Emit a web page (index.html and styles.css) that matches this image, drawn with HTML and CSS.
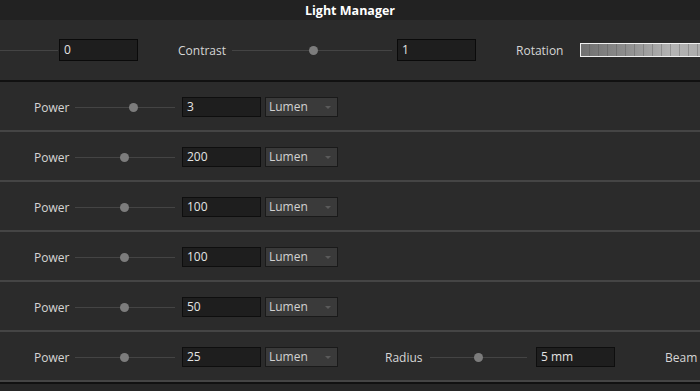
FILE: index.html
```html
<!DOCTYPE html>
<html lang="en">
<head>
    <meta charset="UTF-8">
    <title>Light Manager</title>
    <link rel="stylesheet" href="styles.css">
</head>
<body>
    <div class="title">Light Manager</div>

    <div class="toolbar">
        <div class="slider slider-stub"><span class="knob" style="left: -20px"></span></div>
        <div class="field field-tall">0</div>
        <span class="label label-contrast">Contrast</span>
        <div class="slider slider-wide"><span class="knob" style="left: 77px"></span></div>
        <div class="field field-tall">1</div>
        <span class="label label-rotation">Rotation</span>
        <div class="rotation"></div>
    </div>

    <div class="row">
        <span class="label">Power</span>
        <div class="slider"><span class="knob" style="left: 54px"></span></div>
        <div class="field">3</div>
        <div class="unit">Lumen</div>
    </div>
    <div class="row">
        <span class="label">Power</span>
        <div class="slider"><span class="knob" style="left: 45px"></span></div>
        <div class="field">200</div>
        <div class="unit">Lumen</div>
    </div>
    <div class="row">
        <span class="label">Power</span>
        <div class="slider"><span class="knob" style="left: 45px"></span></div>
        <div class="field">100</div>
        <div class="unit">Lumen</div>
    </div>
    <div class="row">
        <span class="label">Power</span>
        <div class="slider"><span class="knob" style="left: 45px"></span></div>
        <div class="field">100</div>
        <div class="unit">Lumen</div>
    </div>
    <div class="row">
        <span class="label">Power</span>
        <div class="slider"><span class="knob" style="left: 45px"></span></div>
        <div class="field">50</div>
        <div class="unit">Lumen</div>
    </div>
    <div class="row">
        <span class="label">Power</span>
        <div class="slider"><span class="knob" style="left: 45px"></span></div>
        <div class="field">25</div>
        <div class="unit">Lumen</div>
        <span class="label label-radius">Radius</span>
        <div class="slider slider-radius"><span class="knob" style="left: 44px"></span></div>
        <div class="field field-radius">5 mm</div>
        <span class="label label-beam">Beam</span>
    </div>
    <div class="footer"></div>
</body>
</html>
```

FILE: styles.css
```css
body {
    margin: 0;
    background-color: #262626;
    color: #d6d6d6;
    font-family: "Open Sans", "Noto Sans", sans-serif;
    font-size: 12px;
    overflow: hidden;
}
.title {
    height: 20px;
    line-height: 21px;
    background-color: #222;
    color: #fff;
    font-size: 12.5px;
    font-weight: bold;
    text-align: center;
}
.toolbar {
    height: 60px;
    display: flex;
    align-items: center;
    background-color: #2b2b2b;
    border-bottom: 2px solid #111;
    white-space: nowrap;
}
.row {
    height: 46px;
    padding-top: 2px;
    display: flex;
    align-items: center;
    padding-left: 34px;
    background-color: #2b2b2b;
    border-bottom: 2px solid #454545;
    white-space: nowrap;
}
.footer {
    border-top: 2px solid #111;
    height: 10px;
    background-color: #262626;
}
.label {
    width: 41px;
    flex-shrink: 0;
}
.slider {
    position: relative;
    width: 100px;
    height: 1px;
    background-color: #444;
    flex-shrink: 0;
}
.knob {
    position: absolute;
    top: -4px;
    width: 9px;
    height: 9px;
    border-radius: 50%;
    background-color: #7c7c7c;
}
.field {
    width: 73px;
    height: 18px;
    line-height: 18px;
    margin-left: 7px;
    padding-left: 4px;
    background-color: #1e1e1e;
    border: 1px solid #0e0e0e;
    color: #e4e4e4;
    flex-shrink: 0;
}
.unit {
    position: relative;
    width: 68px;
    height: 18px;
    line-height: 18px;
    margin-left: 4px;
    padding-left: 3px;
    background-color: #3a3a3a;
    border: 1px solid #1a1a1a;
    color: #d2d2d2;
    flex-shrink: 0;
}
.unit::after {
    content: "";
    position: absolute;
    right: 6px;
    top: 8px;
    border-left: 3px solid transparent;
    border-right: 3px solid transparent;
    border-top: 3px solid #5a5a5a;
}
.slider-stub {
    width: 58px;
    overflow: hidden;
}
.field-tall {
    height: 20px;
    line-height: 20px;
    margin-left: 1px;
    width: 73px;
    border-color: #0a0a0a;
}
.label-contrast {
    width: 54px;
    margin-left: 40px;
}
.slider-wide {
    width: 160px;
}
.slider-wide + .field {
    margin-left: 5px;
}
.label-rotation {
    width: 64px;
    margin-left: 40px;
}
.rotation {
    width: 130px;
    height: 12px;
    border: 1px solid #f0f0f0;
    background:
        repeating-linear-gradient(90deg, transparent 0, transparent 8px, rgba(70, 70, 70, 0.3) 8px, rgba(70, 70, 70, 0.3) 9px),
        linear-gradient(90deg, #707070, #8e8e8e 35%, #b4b4b4 70%, #a8a8a8);
    flex-shrink: 0;
}
.label-radius {
    width: 45px;
    margin-left: 47px;
}
.slider-radius {
    width: 97px;
}
.field-radius {
    margin-left: 9px;
}
.label-beam {
    margin-left: 50px;
}
```
